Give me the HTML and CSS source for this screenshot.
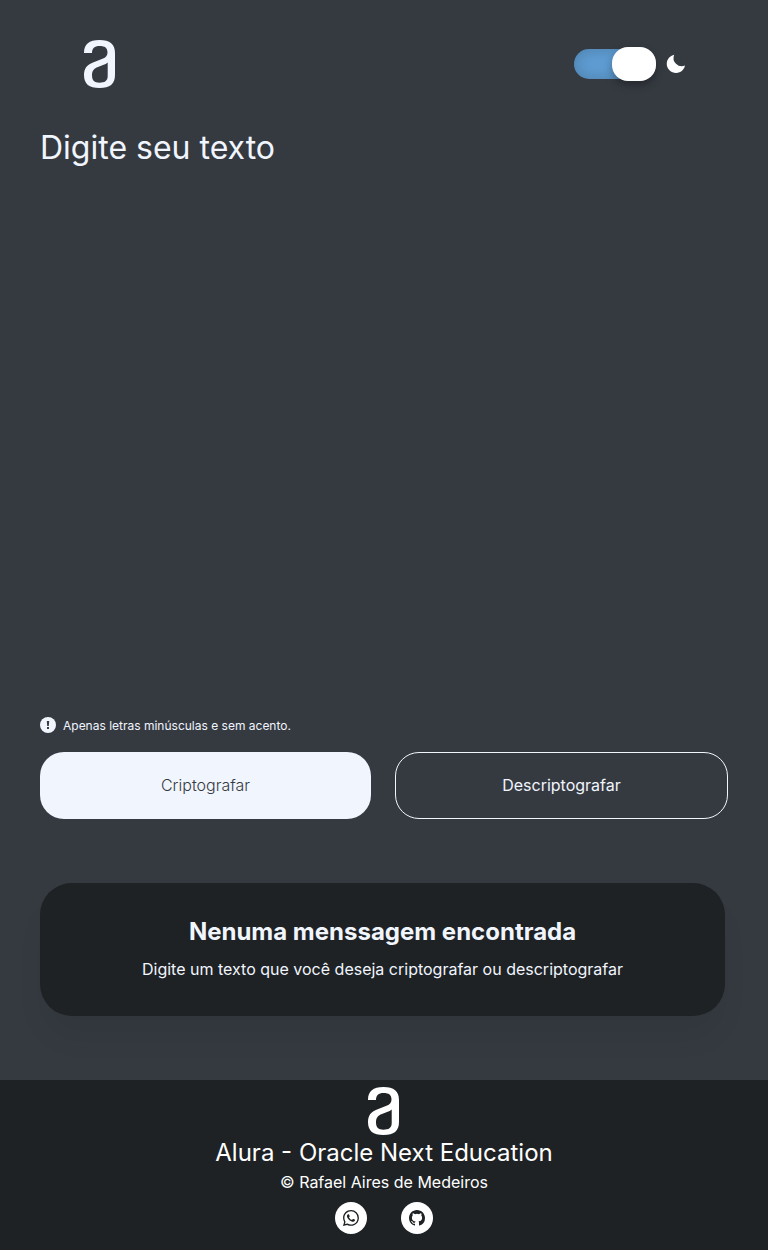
FILE: index.html
```html
<!DOCTYPE html>
<html lang="pt-BR">
<head>
<meta charset="UTF-8">
<meta name="viewport" content="width=device-width, initial-scale=1">
<title>Decodificador de texto</title>
<link rel="stylesheet" href="styles.css">
</head>
<body>
<header class="header">
  <svg class="logo" viewBox="0 0 32 48" role="img" aria-label="Alura"><path d="M0 13C0 4 5 0 15.500 0S31 4 31 13V35C31 44 26 48 15.500 48S0 44 0 35C0 28 3 25 9 22.500L18.500 18.800C22 17.500 23.500 15.500 23.500 12.500C23.500 8 21 6 15.500 6C10.500 6 8 8.500 8 13ZM23.700 22.500C22.500 23.700 21 24.300 19 25L14 27C10 28.500 8 30.500 8 35C8 41 10.500 42.700 15.500 42.700S23.700 41 23.700 36Z"/></svg>
  <label class="theme">
    <input class="switch" type="checkbox" role="switch" checked aria-label="Tema escuro">
    <svg class="moon" viewBox="-1 -1 26 26" aria-hidden="true"><path d="M12 11.807A9.002 9.002 0 0 1 10.049 2a9.942 9.942 0 0 0-5.120 2.735c-3.905 3.905-3.905 10.237 0 14.142 3.906 3.906 10.237 3.905 14.143 0a9.946 9.946 0 0 0 2.735-5.119A9.003 9.003 0 0 1 12 11.807z"/></svg>
  </label>
</header>
<main class="main">
  <textarea class="editor" aria-label="Digite seu texto" placeholder="Digite seu texto"></textarea>
  <p class="note">
    <svg class="note-icon" viewBox="0 0 16 16" aria-hidden="true"><circle cx="8" cy="8" r="8"/><path d="M6.800 4h2.400L8.800 9H7.200zM7 10h2v2H7z"/></svg>
    Apenas letras minúsculas e sem acento.
  </p>
  <div class="actions">
    <button class="button button-primary" type="button">Criptografar</button>
    <button class="button button-outline" type="button">Descriptografar</button>
  </div>
  <section class="result">
    <h1 class="result-title">Nenuma menssagem encontrada</h1>
    <p class="result-text">Digite um texto que você deseja criptografar ou descriptografar</p>
  </section>
</main>
<footer class="footer">
  <svg class="logo logo-footer" viewBox="0 0 32 48" role="img" aria-label="Alura"><path d="M0 13C0 4 5 0 15.500 0S31 4 31 13V35C31 44 26 48 15.500 48S0 44 0 35C0 28 3 25 9 22.500L18.500 18.800C22 17.500 23.500 15.500 23.500 12.500C23.500 8 21 6 15.500 6C10.500 6 8 8.500 8 13ZM23.700 22.500C22.500 23.700 21 24.300 19 25L14 27C10 28.500 8 30.500 8 35C8 41 10.500 42.700 15.500 42.700S23.700 41 23.700 36Z"/></svg>
  <p class="footer-title">Alura - Oracle Next Education</p>
  <p class="footer-author">© Rafael Aires de Medeiros</p>
  <nav class="social" aria-label="Redes sociais">
    <a class="social-link" href="#" aria-label="WhatsApp"><svg viewBox="0 0 16 16" aria-hidden="true"><path d="M13.601 2.326A7.854 7.854 0 0 0 7.994 0C3.627 0 .068 3.558.064 7.926c0 1.399.366 2.760 1.057 3.965L0 16l4.204-1.102a7.933 7.933 0 0 0 3.790.965h.004c4.368 0 7.926-3.558 7.930-7.930A7.898 7.898 0 0 0 13.600 2.326zM7.994 14.521a6.573 6.573 0 0 1-3.356-.920l-.240-.144-2.494.654.666-2.433-.156-.251a6.560 6.560 0 0 1-1.007-3.505c0-3.626 2.957-6.584 6.591-6.584a6.560 6.560 0 0 1 4.660 1.931 6.557 6.557 0 0 1 1.928 4.660c-.004 3.639-2.961 6.592-6.592 6.592zm3.615-4.934c-.197-.099-1.170-.578-1.353-.646-.182-.065-.315-.099-.445.099-.133.197-.513.646-.627.775-.114.133-.232.148-.430.050-.197-.1-.836-.308-1.592-.985-.590-.525-.985-1.175-1.103-1.372-.114-.198-.011-.304.088-.403.087-.088.197-.232.296-.346.100-.114.133-.198.198-.330.065-.134.034-.248-.015-.347-.050-.099-.445-1.076-.612-1.470-.160-.389-.323-.335-.445-.340-.114-.007-.247-.007-.380-.007a.729.729 0 0 0-.529.247c-.182.198-.691.677-.691 1.654 0 .977.710 1.916.810 2.049.098.133 1.394 2.132 3.383 2.992.470.205.840.326 1.129.418.475.152.904.129 1.246.080.380-.058 1.171-.480 1.338-.943.164-.464.164-.860.114-.943-.049-.084-.182-.133-.380-.232z"/></svg></a>
    <a class="social-link" href="#" aria-label="GitHub"><svg viewBox="0 0 16 16" aria-hidden="true"><path d="M8 0C3.580 0 0 3.580 0 8c0 3.540 2.290 6.530 5.470 7.590.4.070.550-.170.550-.380 0-.190-.010-.820-.010-1.490-2.010.370-2.530-.490-2.690-.940-.090-.230-.480-.940-.820-1.130-.280-.150-.680-.520-.010-.530.630-.010 1.080.580 1.230.820.720 1.210 1.870.870 2.330.660.070-.520.280-.870.510-1.070-1.780-.200-3.640-.890-3.640-3.950 0-.870.310-1.590.820-2.150-.080-.200-.360-1.020.080-2.120 0 0 .670-.210 2.200.820a7.600 7.600 0 0 1 4 0c1.530-1.040 2.200-.820 2.200-.820.440 1.100.160 1.920.080 2.120.510.560.820 1.270.820 2.150 0 3.070-1.870 3.750-3.650 3.950.290.250.540.730.540 1.480 0 1.070-.010 1.930-.010 2.200 0 .210.150.460.550.380A8.013 8.013 0 0 0 16 8c0-4.420-3.580-8-8-8z"/></svg></a>
  </nav>
</footer>
</body>
</html>
```
FILE: styles.css
```css
* {
  box-sizing: border-box;
  margin: 0;
}

body {
  min-height: 100vh;
  display: flex;
  flex-direction: column;
  background: #353a41;
  color: #f1f5fe;
  font-family: Inter, sans-serif;
  font-size: 16px;
  line-height: 24px;
}

.header {
  display: flex;
  justify-content: space-between;
  align-items: center;
  padding: 40px 80px 0 84px;
}

.logo {
  display: block;
  width: 32px;
  height: 48px;
  fill: #f1f5fe;
  fill-rule: evenodd;
}

.logo-footer {
  fill: #fff;
}

.theme {
  display: flex;
  align-items: center;
  gap: 8px;
}

.switch {
  appearance: none;
  display: flex;
  justify-content: flex-end;
  align-items: center;
  width: 82px;
  height: 30px;
  margin: 0;
  border-radius: 15px;
  background: #5f9dd3;
  box-shadow: inset 0 0 16px rgba(0, 0, 0, 0.2);
}

.switch::before {
  content: "";
  flex: none;
  width: 44px;
  height: 34px;
  border-radius: 16px;
  background: #fff;
  box-shadow: 0 4px 8px rgba(0, 0, 0, 0.3);
}

.moon {
  width: 24px;
  height: 24px;
  fill: #fff;
}

.main {
  flex: 1;
  display: flex;
  flex-direction: column;
  padding: 40px 40px 64px;
}

.editor {
  flex: 1;
  min-height: 200px;
  padding: 0;
  border: 0;
  outline: 0;
  resize: none;
  background: transparent;
  color: #f1f5fe;
  font: 32px/40px Inter, sans-serif;
}

.editor::placeholder {
  color: #f1f5fe;
  opacity: 1;
}

.note {
  display: flex;
  align-items: flex-start;
  gap: 7px;
  margin: 16px 0 17px;
  font-size: 12px;
  line-height: 18px;
}

.note-icon {
  width: 16px;
  height: 16px;
  fill: #f1f5fe;
}

.note-icon path {
  fill: #353a41;
}

.actions {
  display: flex;
  gap: 24px;
}

.button {
  flex: 1 1 0;
  height: 67px;
  padding: 0 24px 2px;
  border: 0;
  border-radius: 24px;
  font: 16px/24px Inter, sans-serif;
}

.button-primary {
  background: #f1f5fe;
  color: #353a41;
  font-weight: 300;
}

.button-outline {
  border: 1px solid #f1f5fe;
  background: transparent;
  color: #f1f5fe;
}

.result {
  margin: 64px 3px 0 0;
  padding: 33px 32px 35px;
  border-radius: 32px;
  background: #1e2224;
  box-shadow: 0 24px 32px -8px rgba(0, 0, 0, 0.08);
  text-align: center;
}

.result-title {
  margin-bottom: 9px;
  font-size: 24px;
  line-height: 32px;
  font-weight: 700;
}

.footer {
  display: flex;
  flex-direction: column;
  align-items: center;
  padding: 7px 16px 16px;
  background: #1e2224;
  color: #fff;
}

.footer-title {
  font-size: 24px;
  line-height: 35px;
}

.social {
  display: flex;
  gap: 34px;
  margin-top: 8px;
}

.social-link {
  display: grid;
  place-items: center;
  width: 32px;
  height: 32px;
  border-radius: 50%;
  background: #fff;
}

.social-link svg {
  width: 16px;
  height: 16px;
  fill: #1e2224;
}
```
